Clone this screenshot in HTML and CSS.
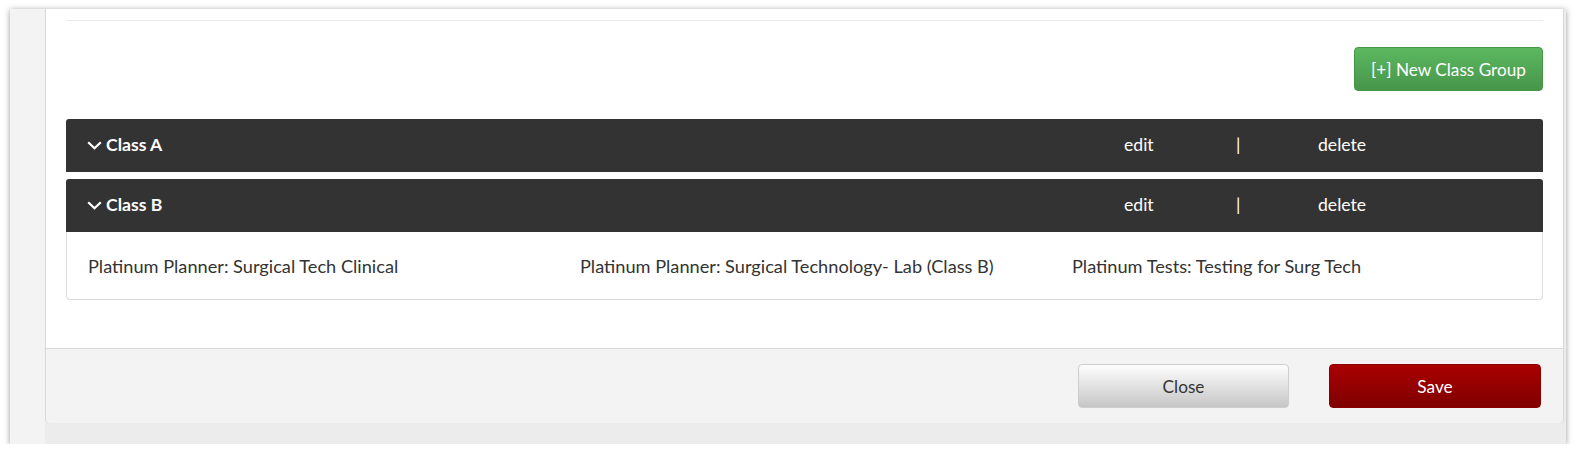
FILE: index.html
```html
<!DOCTYPE html>
<html>
<head>
    <title>Class Groups</title>
    <link rel="stylesheet" href="styles.css">
</head>
<body>
    <div class="frame">
        <div class="side"></div>
        <div class="main">
            <div class="panel">
                <div class="panel-body">
                    <hr class="rule">
                    <div class="toolbar">
                        <button type="button" class="btn btn-green">[+] New Class Group</button>
                    </div>

                    <div class="group">
                        <div class="group-head">
                            <span class="group-title">
                                <svg class="chev" width="15" height="9" viewBox="0 0 15 9"><path d="M1.2 1.2 L7.5 7.3 L13.8 1.2" fill="none" stroke="#fff" stroke-width="2.2"/></svg>
                                Class A
                            </span>
                            <span class="act">edit</span>
                            <span class="act">|</span>
                            <span class="act">delete</span>
                        </div>
                    </div>

                    <div class="group">
                        <div class="group-head">
                            <span class="group-title">
                                <svg class="chev" width="15" height="9" viewBox="0 0 15 9"><path d="M1.2 1.2 L7.5 7.3 L13.8 1.2" fill="none" stroke="#fff" stroke-width="2.2"/></svg>
                                Class B
                            </span>
                            <span class="act">edit</span>
                            <span class="act">|</span>
                            <span class="act">delete</span>
                        </div>
                        <div class="group-body">
                            <span>Platinum Planner: Surgical Tech Clinical</span>
                            <span>Platinum Planner: Surgical Technology- Lab (Class B)</span>
                            <span>Platinum Tests: Testing for Surg Tech</span>
                        </div>
                    </div>
                </div>
                <div class="panel-foot">
                    <button type="button" class="btn btn-close">Close</button>
                    <button type="button" class="btn btn-save">Save</button>
                </div>
            </div>
        </div>
    </div>
</body>
</html>
```
FILE: styles.css
```css
body {
    margin: 0;
    background: #fff;
    font-family: Lato, "Open Sans", sans-serif;
    font-size: 17.6px;
    color: #333;
}
.frame {
    display: flex;
    width: 1556px;
    height: 435px;
    margin: 9px 0 0 10px;
    background: #ececec;
    box-shadow: 0 1px 6px rgba(0, 0, 0, 0.4);
}
.side {
    width: 35px;
    background: #f3f3f3;
}
.main {
    flex: 1;
    display: flex;
    padding: 0 2px 21px 0;
}
.panel {
    flex: 1;
    display: flex;
    flex-direction: column;
    background: #fff;
    border: 1px solid #d8d8d8;
    border-top: none;
    border-radius: 0 0 4px 4px;
}
.panel-body {
    flex: 1;
    padding: 11px 20px 0 20px;
}
.rule {
    margin: 0;
    border: none;
    border-top: 1px solid #eaeaea;
}
.toolbar {
    display: flex;
    justify-content: flex-end;
    margin-top: 26px;
    margin-bottom: 28px;
}
.btn {
    height: 44px;
    border-radius: 4px;
    font-family: Lato, "Open Sans", sans-serif;
    font-size: 17.2px;
    cursor: pointer;
}
.btn-green {
    width: 189px;
    color: #fff;
    background: linear-gradient(#5cb860, #47964a);
    border: 1px solid #449547;
}
.group {
    margin-bottom: 7px;
}
.group-head {
    display: grid;
    grid-template-columns: 1fr 112px 82px 225px;
    align-items: center;
    height: 53px;
    padding-left: 21px;
    padding-bottom: 2px;
    box-sizing: border-box;
    background: #333;
    color: #fff;
    border-radius: 3px 3px 0 0;
}
.group-title {
    display: flex;
    align-items: center;
    gap: 4px;
    font-weight: bold;
}
.chev {
    display: block;
    margin-top: 1px;
}
.group-body {
    display: grid;
    grid-template-columns: 492px 492px 1fr;
    align-items: center;
    height: 67px;
    padding: 0 21px;
    border: 1px solid #dcdcdc;
    border-top: none;
    border-radius: 0 0 4px 4px;
    font-size: 18.2px;
}
.panel-foot {
    display: flex;
    justify-content: flex-end;
    gap: 40px;
    margin-top: 41px;
    padding: 15px 22px 15px 0;
    background: #f3f3f3;
    border-top: 1px solid #dadada;
    border-radius: 0 0 4px 4px;
}
.btn-close {
    width: 211px;
    color: #333;
    background: linear-gradient(#fdfdfd, #c6c6c6);
    border: 1px solid #cdcdcd;
}
.btn-save {
    width: 212px;
    color: #fff;
    background: linear-gradient(#aa0000, #7f0000);
    border: 1px solid #8a0000;
}
```
